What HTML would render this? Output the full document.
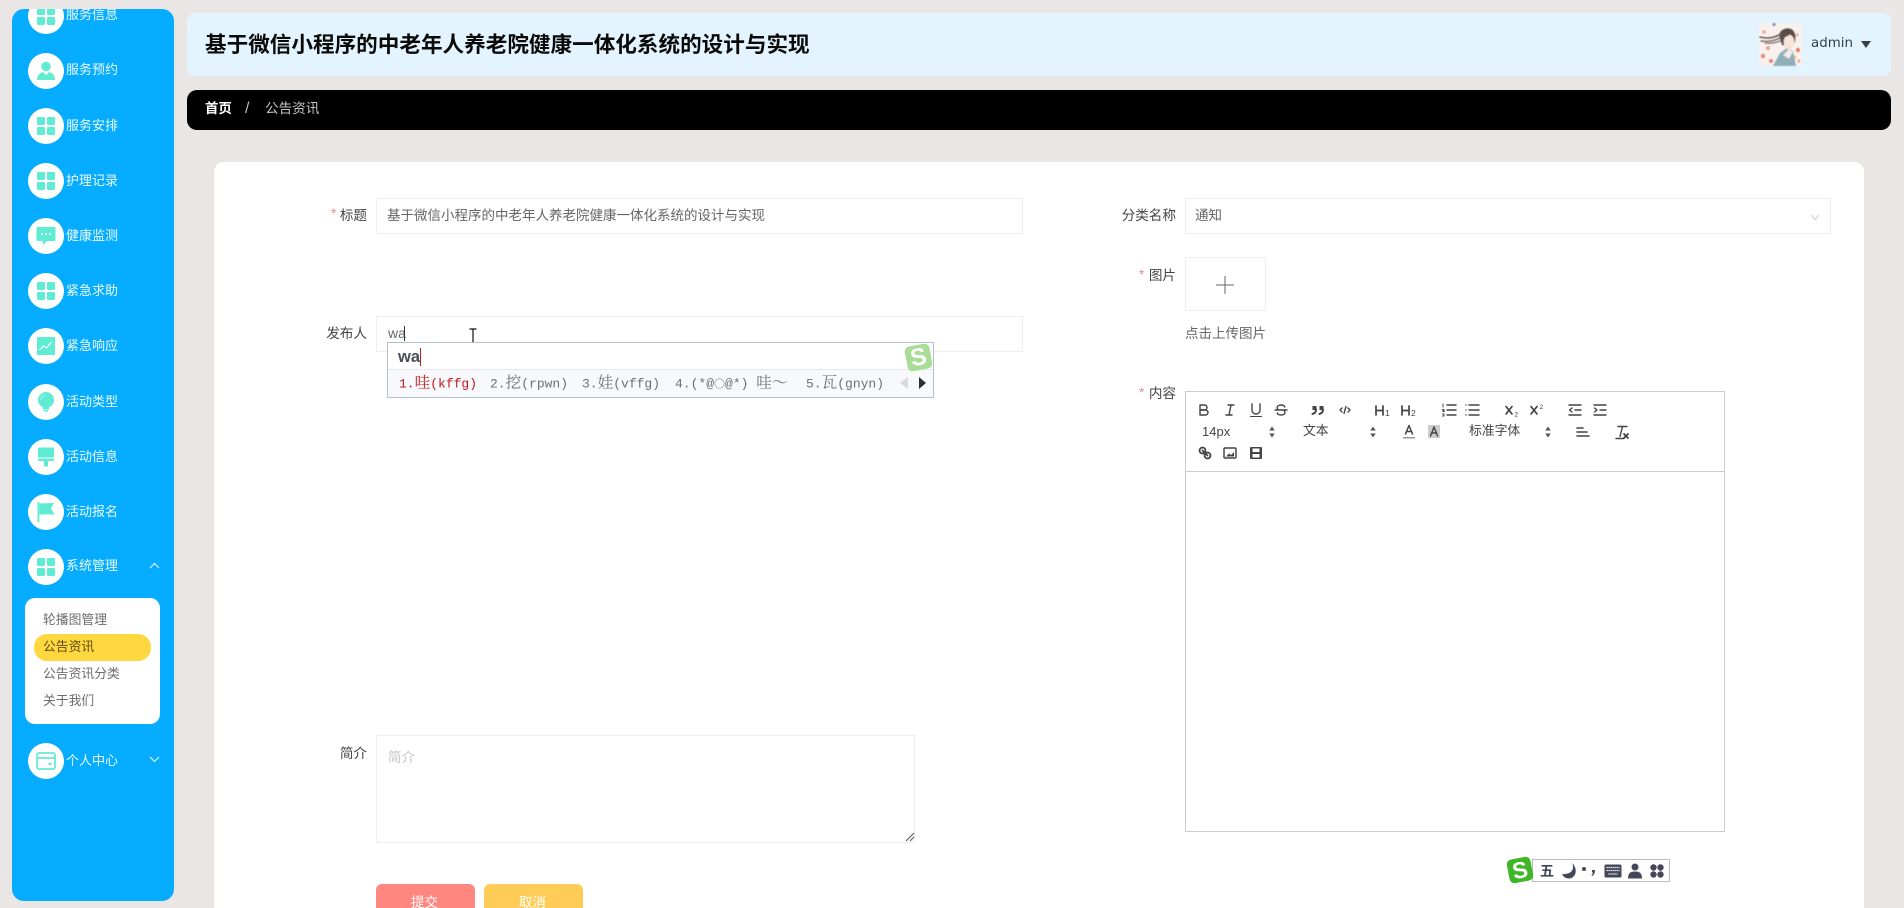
<!DOCTYPE html>
<html lang="zh-CN"><head><meta charset="utf-8"><title>公告资讯</title>
<style>
html,body{margin:0;padding:0;width:1904px;height:908px;overflow:hidden;background:#e9e6e5;font-family:"Liberation Sans","Noto Sans CJK SC",sans-serif}
div,span,svg{position:absolute;box-sizing:border-box}
span.i{position:static}
#root{left:0;top:0;width:1904px;height:908px;overflow:hidden;background:#e9e6e5}
.t{white-space:nowrap;transform:translateY(-50%);line-height:20px}
#side{left:12px;top:9px;width:162px;height:892px;background:#05acff;border-radius:12px;overflow:hidden}
.c{left:16px;width:36px;height:36px;border-radius:50%;background:#fff}
.c svg{left:8px;top:8px;width:20px;height:20px;fill:#60ecd3}
.n{left:54px;font-size:13px;color:#eafcff;line-height:20px;white-space:nowrap;transform:translateY(-50%)}
.m{left:43px;font-size:12.8px;color:#6c6c6c}
.l{font-size:13.6px;color:#444;text-align:right}
.s{font-size:13.6px;color:#f08a8a}
.b{background:#fff;border:1px solid #eeeeee}
.v{font-size:13.5px;color:#666}
.q{width:18px;height:18px;fill:none;stroke:#444;stroke-width:1.4;stroke-linecap:round;stroke-linejoin:round;transform:translate(-50%,-50%)}
.q .f{fill:#444;stroke:none}
.p{width:6px;height:11px;fill:#555;transform:translate(-50%,-50%)}
.c1{font-family:"Liberation Mono","Noto Serif CJK SC",monospace;font-size:13px;color:#6b6f78;white-space:nowrap;transform:translateY(-50%);line-height:20px}
.c1 span{position:static;font-family:"Noto Serif CJK SC",serif;font-size:15.6px}
.sg{background:#3fb628;border-radius:5px;color:#fff;font-weight:bold;text-align:center;transform:rotate(-11deg)}
.st{fill:#44475a;width:20px;height:20px;transform:translate(-50%,-50%)}
</style></head><body>
<div id="root">

<div id="side">
<div class="c" style="top:-11px"><svg viewBox="0 0 20 20"><rect x="1" y="1" width="8" height="8" rx="1.2"/><rect x="11" y="1" width="8" height="8" rx="1.2"/><rect x="1" y="11" width="8" height="8" rx="1.2"/><rect x="11" y="11" width="8" height="8" rx="1.2"/></svg></div><div class="n" style="top:6px">服务信息</div>
<div class="c" style="top:44px"><svg viewBox="0 0 20 20"><circle cx="10" cy="5.500" r="4.800"/><path d="M1 19c0-4.500 2.500-7 6-8l3 3 3-3c3.500 1 6 3.500 6 8z"/></svg></div><div class="n" style="top:61px">服务预约</div>
<div class="c" style="top:99px"><svg viewBox="0 0 20 20"><rect x="1" y="1" width="8" height="8" rx="1.200"/><rect x="11" y="1" width="8" height="8" rx="1.200"/><rect x="1" y="11" width="8" height="8" rx="1.200"/><rect x="11" y="11" width="8" height="8" rx="1.200"/></svg></div><div class="n" style="top:117px">服务安排</div>
<div class="c" style="top:154px"><svg viewBox="0 0 20 20"><rect x="1" y="1" width="8" height="8" rx="1.200"/><rect x="11" y="1" width="8" height="8" rx="1.200"/><rect x="1" y="11" width="8" height="8" rx="1.200"/><rect x="11" y="11" width="8" height="8" rx="1.200"/></svg></div><div class="n" style="top:172px">护理记录</div>
<div class="c" style="top:209px"><svg viewBox="0 0 20 20"><path d="M1.500 1h17a1 1 0 0 1 1 1v12a1 1 0 0 1-1 1H11l-4 4v-4H1.500a1 1 0 0 1-1-1V2a1 1 0 0 1 1-1z"/><circle cx="6" cy="8" r="1" fill="#fff"/><circle cx="10" cy="8" r="1" fill="#fff"/><circle cx="14" cy="8" r="1" fill="#fff"/></svg></div><div class="n" style="top:227px">健康监测</div>
<div class="c" style="top:264px"><svg viewBox="0 0 20 20"><rect x="1" y="1" width="8" height="8" rx="1.200"/><rect x="11" y="1" width="8" height="8" rx="1.200"/><rect x="1" y="11" width="8" height="8" rx="1.200"/><rect x="11" y="11" width="8" height="8" rx="1.200"/></svg></div><div class="n" style="top:282px">紧急求助</div>
<div class="c" style="top:319px"><svg viewBox="0 0 20 20"><rect x="1" y="1" width="18" height="18" rx="1"/><path d="M3.500 14l4-4 3 2 5-6" fill="none" stroke="#fff" stroke-width="1.100"/></svg></div><div class="n" style="top:337px">紧急响应</div>
<div class="c" style="top:375px"><svg viewBox="0 0 20 20"><circle cx="10" cy="8" r="8"/><path d="M7 15.500h6v2H7zM8 18h4v1.500H8z"/><path d="M5 8a5 5 0 0 1 4-5" fill="none" stroke="#a5f5e7" stroke-width="1"/></svg></div><div class="n" style="top:393px">活动类型</div>
<div class="c" style="top:430px"><svg viewBox="0 0 20 20"><rect x="2" y="0.500" width="16" height="10" rx="1"/><rect x="2" y="11.500" width="16" height="2.500"/><rect x="8" y="14" width="4" height="5.500"/></svg></div><div class="n" style="top:448px">活动信息</div>
<div class="c" style="top:485px"><svg viewBox="0 0 20 20"><rect x="1.500" y="0" width="1.800" height="20"/><path d="M3.300 1.500L18 1l-3 5.500 3.500 6H3.300z"/></svg></div><div class="n" style="top:503px">活动报名</div>
<div class="c" style="top:540px"><svg viewBox="0 0 20 20"><rect x="1" y="1" width="8" height="8" rx="1.200"/><rect x="11" y="1" width="8" height="8" rx="1.200"/><rect x="1" y="11" width="8" height="8" rx="1.200"/><rect x="11" y="11" width="8" height="8" rx="1.200"/></svg></div><div class="n" style="top:557px">系统管理</div>
<svg style="left:137px;top:553px;width:11px;height:7px" viewBox="0 0 11 7" fill="none" stroke="#d8f6ff" stroke-width="1.200"><path d="M1 6l4.500-4.500L10 6"/></svg>

<div style="left:13px;top:589px;width:135px;height:126px;background:#fff;border-radius:10px"></div>
<div style="left:22px;top:625px;width:117px;height:27px;background:#ffd83f;border-radius:13px"></div>
<div class="t m" style="left:31px;top:611px">轮播图管理</div>
<div class="t m" style="left:31px;top:638px;color:#5e4a10">公告资讯</div>
<div class="t m" style="left:31px;top:665px">公告资讯分类</div>
<div class="t m" style="left:31px;top:692px">关于我们</div>

<div class="c" style="top:734px"><svg viewBox="0 0 20 20" style="fill:none;stroke:#60ecd3;stroke-width:1.700"><rect x="1" y="2" width="18" height="16" rx="2"/><path d="M1 7h18"/><path d="M12.500 13h3" stroke-width="2"/></svg></div><div class="n" style="top:752px">个人中心</div>
<svg style="left:137px;top:747px;width:11px;height:7px" viewBox="0 0 11 7" fill="none" stroke="#d8f6ff" stroke-width="1.200"><path d="M1 1l4.500 4.500L10 1"/></svg>
</div>

<!-- header -->
<div style="left:187px;top:13px;width:1704px;height:63px;background:#e3f4fe;border-radius:8px"></div>
<div class="t" style="left:205px;top:45px;font-size:21.600px;font-weight:bold;color:#0a0a0a">基于微信小程序的中老年人养老院健康一体化系统的设计与实现</div>
<svg style="left:1759px;top:23px;width:43px;height:43px;filter:blur(.5px)" viewBox="0 0 43 43">
<rect width="43" height="43" rx="3" fill="#f9f1ee"/>
<circle cx="5" cy="9" r="1.800" fill="#efa598"/><circle cx="9" cy="25" r="2" fill="#e9a090"/><circle cx="4" cy="33" r="2.200" fill="#e58a7a"/><circle cx="39" cy="27" r="2" fill="#e8745e"/><circle cx="12" cy="38" r="2" fill="#d9897a"/><circle cx="38" cy="12" r="1.500" fill="#e8b0a0"/><circle cx="15" cy="1.500" r="1.500" fill="#7b86b0"/><circle cx="40" cy="38" r="1.500" fill="#eda090"/><circle cx="36" cy="34" r="1.400" fill="#f0c070"/>
<path d="M14 43l7-13 7-5 6 3 3 15z" fill="#8fb0b8"/>
<path d="M24 32l6-6 4 3-4 7z" fill="#f4ece8"/>
<path d="M20 12c1-5 7-8 12-6 4 2 5 7 4 13l-3 5-10-2z" fill="#5a4b48"/>
<ellipse cx="30" cy="19" rx="5.500" ry="7.500" fill="#f6e3da"/>
<path d="M24 14c3 0 7-2 9-5l2 5-1-5-7-2z" fill="#5a4b48"/>
<g fill="none" stroke="#6b5d5a" stroke-linecap="round"><path d="M22 11C15 15 8 16 1 14" stroke-width="1.600"/><path d="M23 14C16 18 9 19 2 18" stroke-width="1.300"/><path d="M24 17c-5 2-11 4-18 3" stroke-width="1"/></g>
</svg>
<div class="t" style="left:1811px;top:44px;font:13.400px/20px 'DejaVu Sans',sans-serif;color:#333f4f">admin</div>
<svg style="left:1861px;top:41px;width:10px;height:7px" viewBox="0 0 10 7"><path d="M0 0h10L5 7z" fill="#3a3f45"/></svg>

<!-- breadcrumb -->
<div style="left:187px;top:90px;width:1704px;height:40px;background:#000;border-radius:10px"></div>
<div class="t" style="left:205px;top:109px;font-size:13.400px;font-weight:bold;color:#fff">首页</div>
<div class="t" style="left:245px;top:109px;font-size:16px;color:#bbb">/</div>
<div class="t" style="left:265px;top:109px;font-size:13.600px;color:#c4c4c4">公告资讯</div>

<!-- card -->
<div style="left:214px;top:162px;width:1650px;height:746px;background:#fff;border-radius:10px 10px 0 0"></div>

<!-- left column -->
<div class="t s" style="left:331px;top:214px">*</div>
<div class="t l" style="right:1537px;top:216px">标题</div>
<div class="b" style="left:376px;top:198px;width:647px;height:36px"></div>
<div class="t v" style="left:387px;top:216px">基于微信小程序的中老年人养老院健康一体化系统的设计与实现</div>

<div class="t l" style="right:1537px;top:334px">发布人</div>
<div class="b" style="left:376px;top:316px;width:647px;height:36px"></div>
<div class="t v" style="left:388px;top:333px;font-size:14px">wa</div>
<div style="left:404px;top:326px;width:1px;height:15px;background:#333"></div>
<svg style="left:468px;top:328px;width:10px;height:18px" viewBox="0 0 10 18" fill="none" stroke="#111" stroke-width="1.200"><path d="M1.500 1h7M5 1v16M1.500 17h7"/></svg>

<div style="left:387px;top:342px;width:547px;height:56px;background:#fff;border:1px solid #b5c0cc"></div>
<div style="left:388px;top:369px;width:545px;height:28px;background:#f7f9fd;border-top:1px solid #e4e7ec"></div>
<div class="t" style="left:398px;top:357px;font-size:16.500px;font-weight:bold;color:#4a4d5a">wa</div>
<div style="left:420px;top:348px;width:1px;height:18px;background:#d01818"></div>
<div class="c1" style="left:399px;top:383px;color:#c01818">1.<span>哇</span>(kffg)</div>
<div class="c1" style="left:490px;top:383px">2.<span>挖</span>(rpwn)</div>
<div class="c1" style="left:582px;top:383px">3.<span>娃</span>(vffg)</div>
<div class="c1" style="left:675px;top:383px">4.(*@<span style="font-size:11px">○</span>@*) <span>哇～</span></div>
<div class="c1" style="left:806px;top:383px">5.<span>瓦</span>(gnyn)</div>
<svg style="left:900px;top:377px;width:8px;height:12px" viewBox="0 0 8 12"><path d="M8 0v12L0 6z" fill="#d8dade"/></svg>
<svg style="left:919px;top:377px;width:7px;height:12px" viewBox="0 0 7 12"><path d="M0 0v12l7-6z" fill="#2c2f35"/></svg>
<div class="sg" style="left:906px;top:345px;width:25px;height:25px;font-size:24px;line-height:25px;background:#a9dc97;color:#fff">S</div>

<div class="t l" style="right:1537px;top:754px">简介</div>
<div class="b" style="left:376px;top:735px;width:539px;height:108px"></div>
<div class="t v" style="left:388px;top:758px;color:#c4c4c4">简介</div>
<svg style="left:905px;top:832px;width:10px;height:10px" viewBox="0 0 10 10" stroke="#555" stroke-width="1"><path d="M1 9L9 1M5 9L9 5"/></svg>

<div style="left:376px;top:884px;width:99px;height:40px;background:#ff8780;border-radius:6px"></div>
<div style="left:484px;top:884px;width:99px;height:40px;background:#ffcc58;border-radius:6px"></div>
<div class="t" style="left:411px;top:903px;font-size:13.500px;color:#fff">提交</div>
<div class="t" style="left:519px;top:903px;font-size:13.500px;color:#fff">取消</div>

<!-- right column -->
<div class="t l" style="right:728px;top:216px">分类名称</div>
<div class="b" style="left:1185px;top:198px;width:646px;height:36px"></div>
<div class="t v" style="left:1195px;top:216px">通知</div>
<svg style="left:1810px;top:214px;width:10px;height:7px" viewBox="0 0 10 7" fill="none" stroke="#c8ccd2" stroke-width="1"><path d="M1 1l4 4.500L9 1"/></svg>

<div class="t s" style="left:1139px;top:275px">*</div>
<div class="t l" style="right:728px;top:276px">图片</div>
<div class="b" style="left:1185px;top:257px;width:81px;height:54px"></div>
<svg style="left:1216px;top:276px;width:18px;height:18px" viewBox="0 0 18 18" stroke="#666" stroke-width="1"><path d="M9 0v18M0 9h18"/></svg>
<div class="t v" style="left:1185px;top:334px">点击上传图片</div>

<div class="t s" style="left:1139px;top:393px">*</div>
<div class="t l" style="right:728px;top:394px">内容</div>
<div style="left:1185px;top:391px;width:540px;height:441px;background:#fff;border:1px solid #ccc"></div>
<div style="left:1186px;top:471px;width:538px;height:1px;background:#ccc"></div>

<svg class="q" style="left:1204px;top:410px" viewBox="0 0 18 18"><path d="M5,4H9.500A2.500,2.500,0,0,1,12,6.500v0A2.500,2.500,0,0,1,9.500,9H5V4Z"/><path d="M5,9h5.500A2.500,2.500,0,0,1,13,11.500v0A2.500,2.500,0,0,1,10.500,14H5V9Z"/></svg>
<svg class="q" style="left:1230px;top:410px" viewBox="0 0 18 18"><path d="M7 4h6M5 14h6M8 14l2-10"/></svg>
<svg class="q" style="left:1256px;top:410px" viewBox="0 0 18 18"><path d="M5,3V9a4,4,0,0,0,4,4H9a4,4,0,0,0,4-4V3"/><rect class="f" height="1" rx=".5" width="12" x="3" y="15"/></svg>
<svg class="q" style="left:1281px;top:410px" viewBox="0 0 18 18"><path d="M15 9H3"/><path d="M12.800 6C12.300 4.600 10.800 4 9 4 6.800 4 5 5 5 6.500c0 .7.300 1.300.8 1.700M5.200 12c.5 1.400 2 2 3.800 2 2.200 0 4-1 4-2.500 0-.7-.3-1.300-.8-1.700"/></svg>
<svg class="q" style="left:1318px;top:410px" viewBox="0 0 18 18"><rect class="f" x="3.500" y="5" width="4" height="4"/><rect class="f" x="10.500" y="5" width="4" height="4"/><path d="M7 8.500c0 2.400-1.500 4-3.500 4.500M14 8.500c0 2.400-1.500 4-3.500 4.500" stroke-width="2"/></svg>
<svg class="q" style="left:1345px;top:410px" viewBox="0 0 18 18"><path d="M6 7L4 9l2 2M12 7l2 2-2 2M10 5.500l-2 7"/></svg>
<svg class="q" style="left:1384px;top:410px;width:20px" viewBox="0 0 20 18"><path d="M2 5v9M9 5v9M2 9.500h7" stroke-width="1.700"/><text x="11" y="15" font-size="8.500" font-family="Liberation Sans" fill="#444" stroke="none">1</text></svg>
<svg class="q" style="left:1410px;top:410px;width:20px" viewBox="0 0 20 18"><path d="M2 5v9M9 5v9M2 9.500h7" stroke-width="1.700"/><text x="11" y="15" font-size="8.500" font-family="Liberation Sans" fill="#444" stroke="none">2</text></svg>
<svg class="q" style="left:1449px;top:410px" viewBox="0 0 18 18"><path d="M7 4h9M7 9h9M7 14h9" /><path d="M3 3v3M2.500 8.500h1.500v1h-1v1h1.500M2.500 13h1.500v2h-1.500" stroke-width="1"/></svg>
<svg class="q" style="left:1472px;top:410px" viewBox="0 0 18 18"><path d="M6 4h10M6 9h10M6 14h10M3 4h0M3 9h0M3 14h0"/></svg>
<svg class="q" style="left:1512px;top:410px" viewBox="0 0 18 18"><path d="M3 5.500l6 7.500M9 5.500l-6 7.500" stroke-width="1.700"/><text x="11.500" y="15.500" font-size="6.500" font-family="Liberation Sans" fill="#444" stroke="none">2</text></svg>
<svg class="q" style="left:1537px;top:410px" viewBox="0 0 18 18"><path d="M3 5.500l6 7.500M9 5.500l-6 7.500" stroke-width="1.700"/><text x="11.500" y="8" font-size="6.500" font-family="Liberation Sans" fill="#444" stroke="none">2</text></svg>
<svg class="q" style="left:1575px;top:410px" viewBox="0 0 18 18"><path d="M3 4h12M3 14h12M9 9h6M6 7L3.500 9 6 11"/></svg>
<svg class="q" style="left:1600px;top:410px" viewBox="0 0 18 18"><path d="M3 4h12M3 14h12M9 9h6M3.500 7L6 9l-2.500 2"/></svg>

<div class="t" style="left:1202px;top:432px;font-size:13px;color:#444">14px</div>
<svg class="p" style="left:1272px;top:432px" viewBox="0 0 6 11"><path d="M3 0l2.800 4H.2zM3 11L.2 7h5.600z"/></svg>
<div class="t" style="left:1303px;top:431px;font-size:12.800px;color:#444">文本</div>
<svg class="p" style="left:1373px;top:432px" viewBox="0 0 6 11"><path d="M3 0l2.800 4H.2zM3 11L.2 7h5.600z"/></svg>
<svg class="q" style="left:1409px;top:431px" viewBox="0 0 18 18"><path d="M5.500 12L9 3.500 12.500 12M6.500 9.500h5" stroke-width="1.500"/><rect class="f" x="3" y="15" width="12" height="1.500" style="fill:#999"/></svg>
<svg class="q" style="left:1434px;top:431px" viewBox="0 0 18 18"><rect x="3" y="3" width="12" height="13" style="fill:#ccc;stroke:none"/><path d="M5.500 14L9 5l3.500 9M6.500 11h5" stroke-width="1.400"/></svg>
<div class="t" style="left:1469px;top:431px;font-size:12.800px;color:#444">标准字体</div>
<svg class="p" style="left:1548px;top:432px" viewBox="0 0 6 11"><path d="M3 0l2.800 4H.2zM3 11L.2 7h5.600z"/></svg>
<svg class="q" style="left:1583px;top:432px" viewBox="0 0 18 18"><path d="M3 5h6M3 9h10M3 13h12" stroke-width="1.600"/></svg>
<svg class="q" style="left:1622px;top:432px" viewBox="0 0 18 18"><path d="M5 3.500h9M9.500 3.500L7 13.500M3 15.500h8"/><path d="M11 11l4 4M15 11l-4 4" stroke-width="1.800"/></svg>

<svg class="q" style="left:1205px;top:453px" viewBox="0 0 18 18"><circle cx="6.500" cy="6.500" r="3" stroke-width="1.800"/><circle cx="11.500" cy="11.500" r="3" stroke-width="1.800"/><path d="M6.500 6.500l5 5" stroke-width="1.800"/></svg>
<svg class="q" style="left:1230px;top:453px" viewBox="0 0 18 18"><rect x="3" y="4" width="12" height="10" rx="1" stroke-width="1.500"/><path class="f" d="M5 12.500l3-3 2 1.500 3-3v4.500z"/></svg>
<svg class="q" style="left:1256px;top:453px" viewBox="0 0 18 18"><rect class="f" x="3" y="3" width="12" height="12" rx="1"/><rect x="5.500" y="4.500" width="7" height="3.500" style="fill:#fff;stroke:none"/><rect x="5.500" y="10" width="7" height="3.500" style="fill:#fff;stroke:none"/></svg>

<!-- IME status bar -->
<div style="left:1532px;top:859px;width:138px;height:23px;background:#fff;border:1px solid #b8bcc4"></div>
<div class="sg" style="left:1508px;top:858px;width:24px;height:24px;font-size:23px;line-height:24px">S</div>
<div class="t" style="left:1540px;top:871px;font-size:14px;font-weight:bold;color:#44475a">五</div>
<svg class="st" style="left:1569px;top:871px" viewBox="0 0 20 20"><path d="M13 2c3 5 0 12-10 11 2 5 9 6 12 2 3-3 2-10-2-13z"/></svg>
<svg class="st" style="left:1589px;top:871px" viewBox="0 0 20 20"><circle cx="5" cy="8" r="2"/><path d="M13 9h3c0 3-1 5-3 6l-.5-1c1-.6 1.500-1.800 1.500-2.500h-1z"/></svg>
<svg class="st" style="left:1613px;top:871px;width:17px;height:13px" viewBox="0 0 17 13"><rect width="17" height="13" rx="1.500"/><path d="M2 3h13M2 6h13M4 9.500h9" stroke="#fff" stroke-width="1.200" stroke-dasharray="1.300 .7"/></svg>
<svg class="st" style="left:1635px;top:871px;width:14px;height:15px" viewBox="0 0 14 15"><circle cx="7" cy="3.500" r="3.500"/><path d="M0 15c0-5 2-7 7-7s7 2 7 7z"/></svg>
<svg class="st" style="left:1657px;top:871px;width:14px;height:14px" viewBox="0 0 14 14"><circle cx="3.500" cy="3.500" r="3.200"/><circle cx="10.500" cy="3.500" r="3.200"/><circle cx="3.500" cy="10.500" r="3.200"/><circle cx="10.500" cy="10.500" r="3.200"/></svg>

</div>
</body></html>
